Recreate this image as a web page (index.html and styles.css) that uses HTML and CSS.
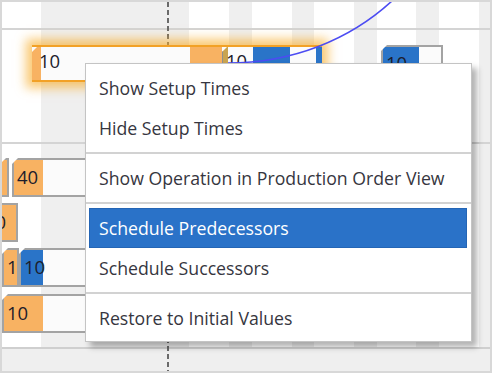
FILE: index.html
```html
<!DOCTYPE html>
<html lang="en">
<head>
    <meta charset="UTF-8">
    <meta name="viewport" content="width=device-width, initial-scale=1.0">
    <title>Production Schedule</title>
    <link rel="stylesheet" href="styles.css">
</head>
<body>
    <div class="chart">
        <div class="cols">
            <div class="col" style="width:39px"></div>
            <div class="col off" style="width:148px"></div>
            <div class="col" style="width:40px"></div>
            <div class="col off" style="width:23px"></div>
            <div class="col" style="width:40px"></div>
            <div class="col off" style="width:22px"></div>
            <div class="col" style="width:40px"></div>
            <div class="col off" style="width:23px"></div>
            <div class="col" style="width:39px"></div>
            <div class="col off" style="width:23px"></div>
            <div class="col" style="width:40px"></div>
            <div class="col off" style="width:11px"></div>
        </div>
        <div class="now-line"></div>

        <div class="timescale"></div>

        <div class="rows">
            <div class="row row-top">
                <div class="sel" style="left:30px; top:15px; width:290px">
                    <div class="bar-in notch setup" style="width:9px"></div>
                    <div class="bar-in run" style="width:149px"><span class="label">10</span></div>
                    <div class="bar-in setup" style="width:32px"></div>
                    <div class="bar-in notch gold" style="width:6px"></div>
                    <div class="bar-in run" style="width:25px"><span class="label">10</span></div>
                    <div class="bar-in blue" style="width:37px"></div>
                    <div class="bar-in run" style="width:26px"></div>
                    <div class="bar-in blue" style="width:6px"></div>
                </div>
                <div class="bar is-blue" style="left:379px; top:15px; width:62px; --setup:36px"><span>10</span></div>
            </div>
            <div class="row row-lanes">
                <div class="bar full" style="left:-2px; top:14px; width:9px; --setup:9px"></div>
                <div class="bar" style="left:10px; top:14px; width:140px; --setup:29px"><span>40</span></div>
                <div class="bar full" style="left:-22px; top:59px; width:38px; --setup:38px"><span>10</span></div>
                <div class="bar full" style="left:0; top:104px; width:17px; --setup:17px"><span>1</span></div>
                <div class="bar is-blue" style="left:17px; top:104px; width:130px; --setup:22px"><span>10</span></div>
                <div class="bar" style="left:0; top:150px; width:150px; --setup:39px"><span>10</span></div>
            </div>
        </div>

        <div class="footer"></div>

        <svg class="link" width="492" height="373" viewBox="0 0 492 373">
            <path d="M228 63 C 292 63 350 40 393 0" fill="none" stroke="#4c4cf2" stroke-width="1.6"/>
        </svg>

        <ul class="menu">
            <li class="menu-item">Show Setup Times</li>
            <li class="menu-item">Hide Setup Times</li>
            <li class="menu-sep"></li>
            <li class="menu-item">Show Operation in Production Order View</li>
            <li class="menu-sep"></li>
            <li class="menu-item active">Schedule Predecessors</li>
            <li class="menu-item">Schedule Successors</li>
            <li class="menu-sep"></li>
            <li class="menu-item">Restore to Initial Values</li>
        </ul>
    </div>
</body>
</html>
```

FILE: styles.css
```css
body {
    margin: 0;
    font-family: "Open Sans", "Noto Sans", sans-serif;
}
.chart {
    position: relative;
    width: 492px;
    height: 373px;
    box-sizing: border-box;
    border: 2px solid #d8d8d8;
    overflow: hidden;
    display: flex;
    flex-direction: column;
}
.cols {
    position: absolute;
    top: 0;
    left: 0;
    right: 0;
    bottom: 0;
    display: flex;
}
.col {
    background: #fff;
    flex-shrink: 0;
}
.col.off {
    background: #efefef;
}
.now-line {
    position: absolute;
    top: 0;
    bottom: 0;
    left: 165px;
    width: 2px;
    background: repeating-linear-gradient(to bottom, #6a6a6a 0 5px, transparent 5px 8px);
    z-index: 2;
}
.timescale {
    position: relative;
    height: 26px;
    border-bottom: 2px solid #d4d4d4;
    flex-shrink: 0;
}
.rows {
    position: relative;
    flex: 1;
}
.row {
    position: relative;
    z-index: 3;
}
.row-top {
    height: 112px;
    border-bottom: 2px solid #d4d4d4;
}
.row-lanes {
    height: 203px;
    overflow: hidden;
}
.footer {
    position: relative;
    z-index: 1;
    height: 22px;
    border-top: 2px solid #cfcfcf;
    background: #efefef;
    flex-shrink: 0;
}

/* operation bars */
.bar {
    position: absolute;
    height: 37px;
    box-sizing: border-box;
    border: 2px solid #a3a3a3;
    background: linear-gradient(to right, #f8b262 0 var(--setup), #fbfbfb var(--setup));
    clip-path: polygon(6px 0, 100% 0, 100% 100%, 0 100%, 0 6px);
    font-size: 18.5px;
    color: #1d1d2b;
    line-height: 31px;
    padding-left: 3px;
    white-space: nowrap;
}
.bar.is-blue {
    background: linear-gradient(to right, #2a74c8 0 var(--setup), #fbfbfb var(--setup));
    height: 37px;
}
.row-lanes .bar {
    height: 39px;
    line-height: 33px;
}
.sel {
    position: absolute;
    height: 37px;
    display: flex;
    box-sizing: border-box;
    border-top: 2px solid #f2a126;
    border-bottom: 2px solid #f2a126;
    box-shadow: 0 0 10px 6px rgba(248, 172, 40, 0.65);
    background: #fbfbfb;
}
.bar-in {
    position: relative;
    flex-shrink: 0;
    height: 100%;
}
.bar-in.setup {
    background: #f8b262;
}
.bar-in.gold {
    background: #c9a451;
    border-left: 1px solid #8f8f8f;
    box-sizing: border-box;
}
.bar-in.blue {
    background: #2a74c8;
}
.bar-in.run {
    background: #fbfbfb;
}
.bar-in.notch {
    clip-path: polygon(5px 0, 100% 0, 100% 100%, 0 100%, 0 5px);
}
.label {
    position: absolute;
    left: -2px;
    top: 0;
    font-size: 18.5px;
    line-height: 27px;
    color: #1d1d2b;
}
.link {
    position: absolute;
    top: -2px;
    left: -2px;
    z-index: 4;
    pointer-events: none;
}

/* context menu */
.menu {
    position: absolute;
    left: 83px;
    top: 61px;
    width: 387px;
    margin: 0;
    padding: 4px 4px 3px 3px;
    list-style: none;
    box-sizing: border-box;
    background: #fff;
    border: 1px solid #c4c4c4;
    box-shadow: 5px 5px 6px rgba(0, 0, 0, 0.3);
    z-index: 5;
    font-size: 17.7px;
    color: #363640;
}
.menu-item {
    height: 40px;
    line-height: 38px;
    padding-left: 9px;
    box-sizing: border-box;
    border: 1px solid transparent;
    white-space: nowrap;
}
.menu-item.active {
    background: #2a72c8;
    border-color: #2465b5;
    color: #fff;
}
.menu-sep {
    height: 2px;
    margin: 4px -4px 4px -3px;
    background: #d2d2d2;
}
```
